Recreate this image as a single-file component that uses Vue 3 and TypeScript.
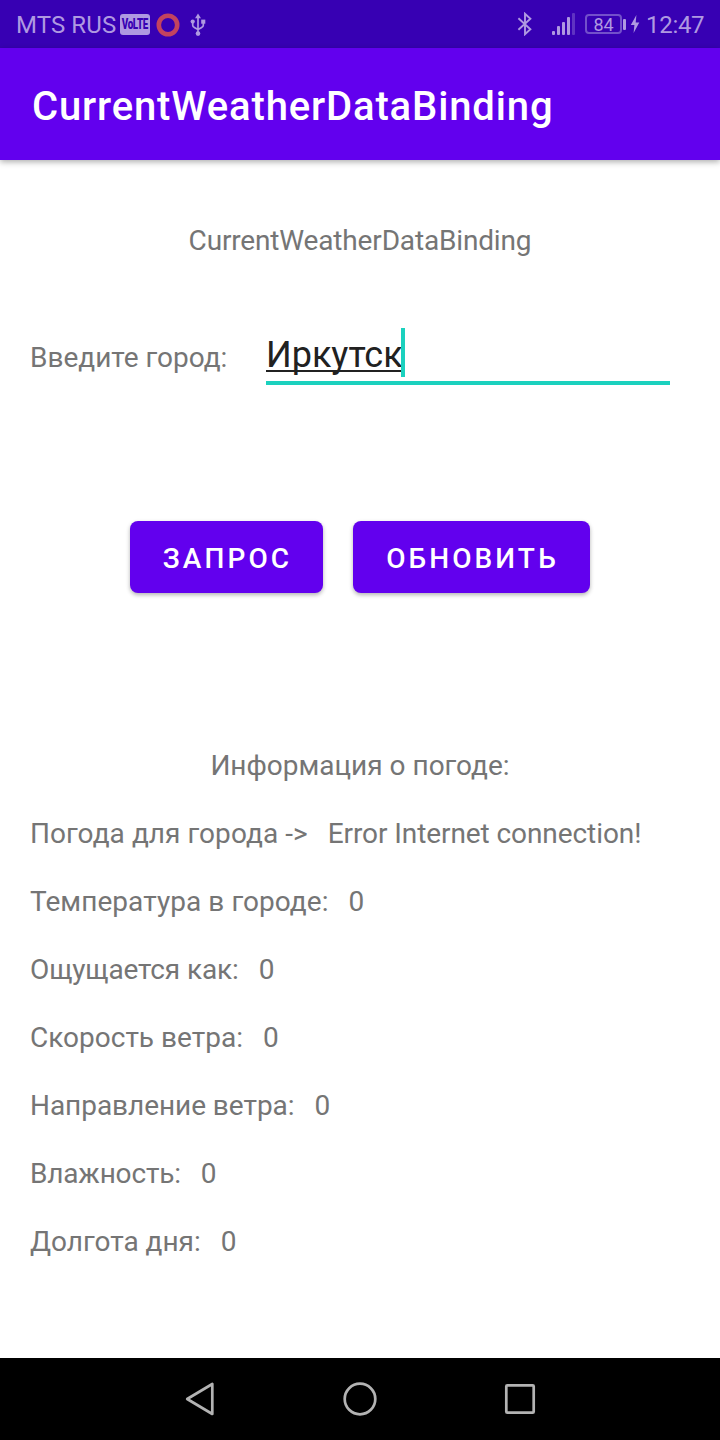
<script setup lang="ts">
import { ref } from 'vue'

interface Reading {
  label: string
  value: string
  labelTracking?: number
  valueTracking?: number
}

const appName = 'CurrentWeatherDataBinding'
const city = ref('Иркутск')

const readings = ref<Reading[]>([
  {
    label: 'Погода для города ->',
    value: 'Error Internet connection!',
    labelTracking: 0.06,
    valueTracking: -0.08,
  },
  { label: 'Температура в городе:', value: '0', labelTracking: 0.07 },
  { label: 'Ощущается как:', value: '0', labelTracking: -0.12 },
  { label: 'Скорость ветра:', value: '0' },
  { label: 'Направление ветра:', value: '0', labelTracking: -0.05 },
  { label: 'Влажность:', value: '0', labelTracking: -0.17 },
  { label: 'Долгота дня:', value: '0' },
])

const tracking = (px = 0) => ({ letterSpacing: `${px}px` })
</script>

<template>
  <div class="screen">
    <header class="status">
      <span class="carrier">MTS RUS</span>
      <span class="volte"><span class="volte-text">VoLTE</span></span>
      <svg class="ring" width="24" height="24" viewBox="0 0 24 24">
        <circle cx="12" cy="12" r="9.2" fill="none" stroke="#c3435f" stroke-width="4.6" />
      </svg>
      <svg class="usb" width="16" height="24" viewBox="0 0 16 24">
        <g fill="none" stroke="#af99e1" stroke-width="1.7">
          <path d="M8 3v18M2.700 9v3.200q0 1.600 1.600 2.200L8 16.600l3.700-2.200q1.600-.6 1.600-2.200V9" />
        </g>
        <g fill="#af99e1">
          <path d="M8 .6l3 4.600H5z" />
          <circle cx="2.700" cy="8.600" r="2.100" />
          <rect x="11.200" y="6.600" width="4.100" height="4.100" />
          <circle cx="8" cy="20.600" r="2.300" />
        </g>
      </svg>
      <span class="spacer"></span>
      <svg class="bluetooth" width="16" height="24" viewBox="0 0 16 24">
        <path
          d="M1.400 6.200L13.400 17.200L8 22.200V1.800L13.400 6.800L1.400 17.800"
          fill="none"
          stroke="#af99e1"
          stroke-width="1.900"
        />
      </svg>
      <svg class="signal" width="24" height="24" viewBox="0 0 24 24">
        <g fill="#af99e1">
          <rect x="1" y="19" width="3" height="4" rx="1" />
          <rect x="6" y="14" width="3" height="9" rx="1" />
          <rect x="11" y="10" width="3" height="13" rx="1" />
          <rect x="16" y="5" width="3" height="18" rx="1" />
        </g>
        <rect x="21" y="1" width="3" height="22" rx="1" fill="#5f33c2" />
      </svg>
      <span class="battery">84</span>
      <span class="nub"></span>
      <svg class="bolt" width="10" height="20" viewBox="0 0 10 20">
        <path d="M6.400 1L.8 11H4.400L3.600 19L9.300 8.600H5.700z" fill="#af99e1" />
      </svg>
      <span class="clock">12:47</span>
    </header>

    <div class="appbar">
      <h1 class="title">{{ appName }}</h1>
    </div>

    <main class="content">
      <p class="heading">{{ appName }}</p>

      <div class="city-row">
        <span class="city-label">Введите город:</span>
        <div class="field">
          <span class="city">{{ city }}</span><span class="caret"></span>
        </div>
      </div>

      <div class="actions">
        <button class="btn">ЗАПРОС</button>
        <button class="btn wide">ОБНОВИТЬ</button>
      </div>

      <p class="info-title">Информация о погоде:</p>
      <div class="readings">
        <div v-for="item in readings" :key="item.label" class="reading">
          <span :style="tracking(item.labelTracking)">{{ item.label }}</span>
          <span :style="tracking(item.valueTracking)">{{ item.value }}</span>
        </div>
      </div>
    </main>

    <nav class="navbar">
      <svg width="40" height="40" viewBox="0 0 40 40">
        <path d="M7.200 20L32.300 5V35z" />
      </svg>
      <svg width="40" height="40" viewBox="0 0 40 40">
        <circle cx="20" cy="20" r="15.300" />
      </svg>
      <svg width="40" height="40" viewBox="0 0 40 40">
        <rect x="6.300" y="6.300" width="27.400" height="27.400" rx="1" />
      </svg>
    </nav>
  </div>
</template>

<style>
body {
  margin: 0;
  background: #fff;
}
</style>

<style scoped>
.screen {
  width: 720px;
  height: 1440px;
  display: flex;
  flex-direction: column;
  overflow: hidden;
  background: #fff;
  color: #757575;
  font-family: Roboto, "Noto Sans", sans-serif;
  font-size: 28px;
  line-height: 38px;
}
p,
h1 {
  margin: 0;
}
.status {
  height: 48px;
  flex: none;
  box-sizing: border-box;
  padding: 0 16px;
  display: flex;
  align-items: center;
  background: #3700b3;
  color: #af99e1;
  font-size: 24px;
  line-height: 48px;
  white-space: nowrap;
}
.status > * {
  flex: none;
}
.status .spacer {
  flex: 1;
}
.carrier {
  width: 103.5px;
  padding-top: 2px;
  letter-spacing: 0.1px;
}
.volte {
  width: 30px;
  height: 21px;
  border-radius: 3px;
  background: #af99e1;
  color: #3700b3;
  display: flex;
  align-items: center;
  justify-content: center;
}
.volte-text {
  font-size: 14px;
  line-height: 21px;
  font-weight: 900;
  letter-spacing: -0.4px;
  transform: scaleX(0.7);
}
.ring {
  margin-left: 6.5px;
  margin-top: 2px;
}
.usb {
  margin-left: 10px;
  margin-top: 2px;
}
.bluetooth {
  margin-right: 18px;
}
.signal {
  margin-right: 10px;
}
.battery {
  width: 37px;
  height: 20px;
  box-sizing: border-box;
  border: 2px solid #7350cb;
  border-radius: 4px;
  font-size: 18px;
  line-height: 17px;
  text-align: center;
}
.nub {
  width: 3px;
  height: 11px;
  margin-left: 1px;
  border-radius: 1px;
  background: #af99e1;
}
.bolt {
  margin-left: 4px;
}
.clock {
  width: 58px;
  margin-left: 6px;
  padding-top: 2px;
  letter-spacing: -0.3px;
}
.appbar {
  height: 112px;
  flex: none;
  box-sizing: border-box;
  padding: 5px 32px 0;
  display: flex;
  align-items: center;
  background: #6200ee;
  box-shadow: 0 2px 6px rgba(0, 0, 0, 0.32);
}
.title {
  color: #fff;
  font-size: 40px;
  line-height: 48px;
  font-weight: 500;
  letter-spacing: 0.86px;
}
.content {
  flex: 1;
  display: flex;
  flex-direction: column;
  padding: 62px 30px 0;
}
.heading,
.info-title {
  text-align: center;
}
.heading {
  letter-spacing: -0.16px;
}
.city-row {
  display: flex;
  align-items: flex-start;
  margin-top: 68px;
}
.city-label {
  width: 236px;
  padding-top: 11px;
}
.field {
  width: 404px;
  height: 57px;
  box-sizing: border-box;
  display: flex;
  align-items: flex-start;
  border-bottom: 4px solid #1bd1be;
}
.city {
  height: 46px;
  color: #212121;
  font-size: 36px;
  line-height: 54px;
  text-decoration: underline;
  text-decoration-thickness: 2px;
  text-decoration-skip-ink: none;
  text-underline-offset: 3px;
}
.caret {
  width: 4px;
  height: 49px;
  margin-left: -2px;
  background: #1bd1be;
}
.actions {
  display: flex;
  justify-content: center;
  gap: 30px;
  margin-top: 136px;
}
.btn {
  width: 193px;
  height: 72px;
  padding: 3px 0 0 2px;
  border: 0;
  border-radius: 8px;
  background: #6200ee;
  color: #fff;
  font: 500 28px/38px Roboto, "Noto Sans", sans-serif;
  letter-spacing: 3.1px;
  box-shadow: 0 2px 4px rgba(0, 0, 0, 0.3);
}
.btn.wide {
  width: 237px;
}
.info-title {
  margin-top: 154px;
}
.readings {
  display: flex;
  flex-direction: column;
  gap: 30px;
  margin-top: 30px;
}
.reading {
  display: flex;
  gap: 20px;
}
.navbar {
  height: 82px;
  flex: none;
  display: flex;
  justify-content: center;
  align-items: center;
  gap: 120px;
  background: #000;
}
.navbar svg {
  fill: none;
  stroke: #b3b3b3;
  stroke-width: 2.7;
  stroke-linejoin: round;
}
</style>
